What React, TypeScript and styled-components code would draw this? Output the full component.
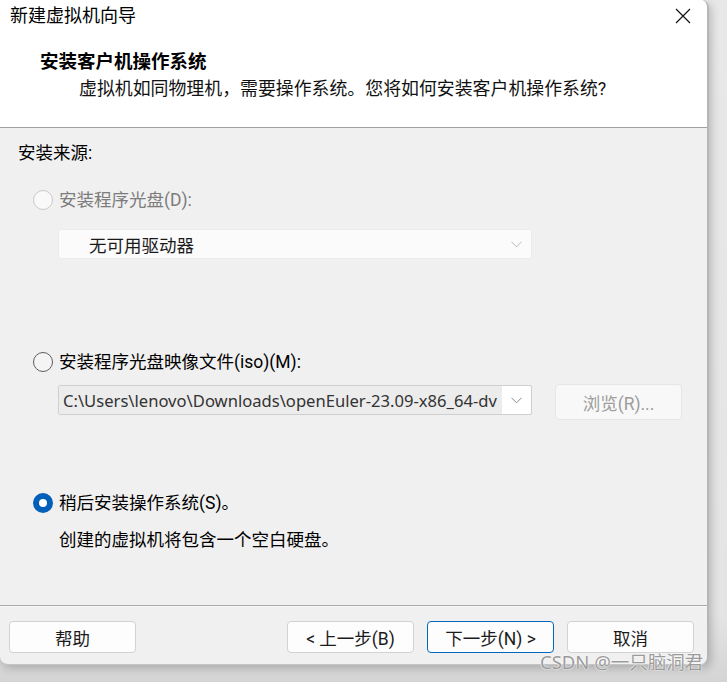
import React from "react";
import styled, { createGlobalStyle } from "styled-components";

const Global = createGlobalStyle`
  html, body { margin: 0; padding: 0; }
  body {
    width: 727px;
    height: 682px;
    overflow: hidden;
    background: #dcdcdc;
    font-family: "Noto Sans", "Noto Sans CJK SC", sans-serif;
    color: #000;
  }
`;

const UI_FONT = `"Roboto", "Noto Sans CJK SC", sans-serif`;

const Page = styled.div`
  position: relative;
  width: 727px;
  height: 682px;
  background: linear-gradient(180deg, #e8e8e8 0%, #e4e4e4 90%, #d4d4d4 100%);
`;

const Dialog = styled.div`
  width: 709px;
  height: 665px;
  box-sizing: border-box;
  background: #f0f0f0;
  border-right: 2px solid #b6b6b6;
  border-bottom: 1px solid #c4c4c4;
  border-radius: 0 8px 8px 8px;
  box-shadow: 2px 3px 10px rgba(0, 0, 0, 0.22);
  display: flex;
  flex-direction: column;
  overflow: hidden;
  font-family: ${UI_FONT};
`;

const Top = styled.div`
  background: #fff;
  height: 128px;
  box-sizing: border-box;
  border-bottom: 1px solid #a0a0a0;
  display: flex;
  flex-direction: column;
`;

const TitleBar = styled.div`
  height: 32px;
  display: flex;
  align-items: center;
  justify-content: space-between;
  padding: 0 16px 0 10px;
`;

const TitleText = styled.span`
  font-size: 18px;
  line-height: 24px;
  color: #000;
`;

const CloseBtn = styled.div`
  width: 16px;
  height: 16px;
  display: flex;
  align-items: center;
  justify-content: center;
`;

const Header = styled.div`
  padding: 18px 0 0 40px;
  display: flex;
  flex-direction: column;
  gap: 3px;
`;

const HeadTitle = styled.div`
  font-size: 18.5px;
  line-height: 24px;
  font-weight: 700;
`;

const HeadSub = styled.div`
  font-size: 17.9px;
  line-height: 24px;
  padding-left: 39px;
  color: #111;
`;

const Body = styled.div`
  flex: 1;
  padding: 13px 0 0 18px;
  display: flex;
  flex-direction: column;
  border-bottom: 1px solid #a8a8a8;
`;

const SectionLabel = styled.div`
  font-size: 17.5px;
  line-height: 24px;
`;

const Option = styled.div<{ $mt: number }>`
  margin-top: ${(p) => p.$mt}px;
  padding-left: 15px;
  display: flex;
  flex-direction: column;
`;

const RadioRow = styled.div`
  display: flex;
  align-items: center;
  gap: 6px;
  height: 24px;
`;

const RadioCircle = styled.span<{ $state: "disabled" | "off" | "on" }>`
  width: 20px;
  height: 20px;
  box-sizing: border-box;
  border-radius: 50%;
  flex: none;
  border: ${(p) =>
    p.$state === "on"
      ? "6px solid #005fb8"
      : p.$state === "off"
      ? "1px solid #5d5d5d"
      : "1px solid #c9c9c9"};
  background: ${(p) =>
    p.$state === "on" ? "#fff" : p.$state === "off" ? "#f4f4f4" : "#f9f9f9"};
`;

const RadioLabel = styled.span<{ $disabled?: boolean }>`
  font-size: 17.5px;
  line-height: 24px;
  color: ${(p) => (p.$disabled ? "#7c7c7c" : "#000")};
  white-space: nowrap;
`;

const Indent = styled.div<{ $mt: number }>`
  margin-top: ${(p) => p.$mt}px;
  padding-left: 25px;
  display: flex;
  align-items: flex-start;
  gap: 23px;
`;

const Combo = styled.div<{ $variant: "disabled" | "path" }>`
  width: 474px;
  height: 30px;
  box-sizing: border-box;
  display: flex;
  align-items: center;
  background: ${(p) => (p.$variant === "disabled" ? "#fbfbfb" : "#fff")};
  border: 1px solid ${(p) => (p.$variant === "disabled" ? "#ececec" : "#cfcfcf")};
  border-radius: 2px;
  overflow: hidden;
`;

const ComboText = styled.div<{ $variant: "disabled" | "path" }>`
  flex: 1;
  height: 100%;
  display: flex;
  align-items: center;
  overflow: hidden;
  white-space: nowrap;
  font-family: ${(p) => (p.$variant === "path" ? `"Noto Sans", sans-serif` : UI_FONT)};
  font-size: ${(p) => (p.$variant === "disabled" ? "17.5px" : "16.6px")};
  padding-left: ${(p) => (p.$variant === "disabled" ? "30px" : "4px")};
  background: ${(p) => (p.$variant === "path" ? "#ececec" : "transparent")};
  color: ${(p) => (p.$variant === "path" ? "#333" : "#1a1a1a")};
  margin: ${(p) => (p.$variant === "path" ? "1px 0" : "0")};
`;

const Chevron = styled.div`
  width: 29px;
  flex: none;
  display: flex;
  align-items: center;
  justify-content: center;
`;

const Button = styled.button<{ $primary?: boolean; $disabled?: boolean }>`
  width: 127px;
  height: 32px;
  box-sizing: border-box;
  border-radius: 4px;
  border: 1px solid ${(p) => (p.$primary ? "#0067c0" : p.$disabled ? "#e6e6e6" : "#d2d2d2")};
  background: ${(p) => (p.$disabled ? "#f8f8f8" : "#fdfdfd")};
  color: ${(p) => (p.$disabled ? "#9d9d9d" : "#1b1b1b")};
  font-family: ${UI_FONT};
  font-size: 17.5px;
  padding: 0;
  display: flex;
  align-items: center;
  justify-content: center;
  cursor: default;
`;

const BrowseButton = styled(Button)`
  height: 36px;
  margin-top: -1px;
`;

const Description = styled.div`
  margin-top: 13px;
  padding-left: 41px;
  font-size: 17.5px;
  line-height: 24px;
`;

const Footer = styled.div`
  height: 58px;
  box-sizing: border-box;
  padding: 14px 13px 0 9px;
  display: flex;
  align-items: flex-start;
  border-top: 1px solid #fafafa;
`;

const FooterRight = styled.div`
  margin-left: auto;
  display: flex;
  gap: 13px;
`;

const Watermark = styled.div`
  position: absolute;
  left: 540px;
  top: 650px;
  font-family: "Noto Sans", "Noto Sans CJK SC", sans-serif;
  font-size: 18.5px;
  line-height: 24px;
  color: #9b9b9b;
  text-shadow: 0 0 2px #fff, 0 0 1px #fff;
  white-space: nowrap;
`;

const ChevronIcon = ({ color }: { color: string }) => (
  <svg width="11" height="7" viewBox="0 0 11 7">
    <polyline points="0.5,0.8 5.5,5.8 10.5,0.8" fill="none" stroke={color} strokeWidth="1" />
  </svg>
);

export default function App() {
  return (
    <>
      <Global />
      <Page>
        <Dialog>
          <Top>
            <TitleBar>
              <TitleText>新建虚拟机向导</TitleText>
              <CloseBtn>
                <svg width="16" height="16" viewBox="0 0 16 16">
                  <path d="M1 1 L15 15 M15 1 L1 15" stroke="#111" strokeWidth="1.2" />
                </svg>
              </CloseBtn>
            </TitleBar>
            <Header>
              <HeadTitle>安装客户机操作系统</HeadTitle>
              <HeadSub>虚拟机如同物理机，需要操作系统。您将如何安装客户机操作系统?</HeadSub>
            </Header>
          </Top>
          <Body>
            <SectionLabel>安装来源:</SectionLabel>
            <Option $mt={23}>
              <RadioRow>
                <RadioCircle $state="disabled" />
                <RadioLabel $disabled>安装程序光盘(D):</RadioLabel>
              </RadioRow>
              <Indent $mt={17}>
                <Combo $variant="disabled">
                  <ComboText $variant="disabled">无可用驱动器</ComboText>
                  <Chevron>
                    <ChevronIcon color="#b5b5b5" />
                  </Chevron>
                </Combo>
              </Indent>
            </Option>
            <Option $mt={91}>
              <RadioRow>
                <RadioCircle $state="off" />
                <RadioLabel>安装程序光盘映像文件(iso)(M):</RadioLabel>
              </RadioRow>
              <Indent $mt={11}>
                <Combo $variant="path">
                  <ComboText $variant="path">
                    C:\Users\lenovo\Downloads\openEuler-23.09-x86_64-dv
                  </ComboText>
                  <Chevron>
                    <ChevronIcon color="#8a8a8a" />
                  </Chevron>
                </Combo>
                <BrowseButton $disabled>浏览(R)...</BrowseButton>
              </Indent>
            </Option>
            <Option $mt={71}>
              <RadioRow>
                <RadioCircle $state="on" />
                <RadioLabel>稍后安装操作系统(S)。</RadioLabel>
              </RadioRow>
            </Option>
            <Description>创建的虚拟机将包含一个空白硬盘。</Description>
          </Body>
          <Footer>
            <Button>帮助</Button>
            <FooterRight>
              <Button>&lt; 上一步(B)</Button>
              <Button $primary>下一步(N) &gt;</Button>
              <Button>取消</Button>
            </FooterRight>
          </Footer>
        </Dialog>
        <Watermark>CSDN @一只脑洞君</Watermark>
      </Page>
    </>
  );
}
